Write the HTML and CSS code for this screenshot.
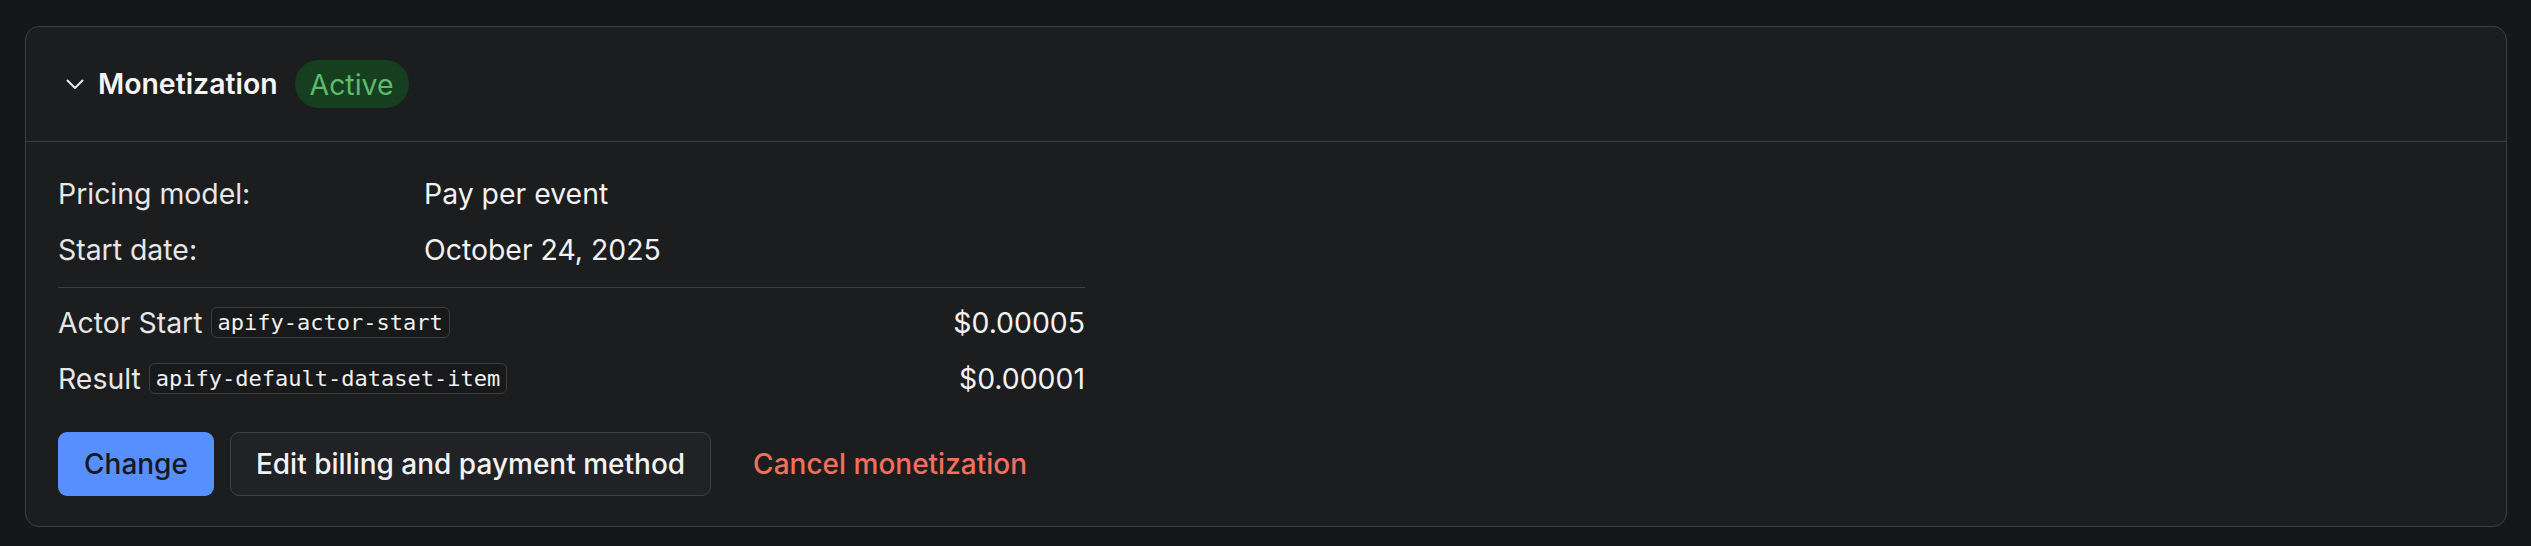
FILE: index.html
```html
<!DOCTYPE html>
<html lang="en">
<head>
<meta charset="utf-8">
<title>Monetization</title>
<link rel="stylesheet" href="styles.css">
</head>
<body>
  <section class="card">
    <header class="card-header">
      <svg class="chevron" width="18" height="11" viewBox="0 0 18 11" aria-hidden="true">
        <polyline points="1.5,1.5 9,9 16.5,1.5" fill="none" stroke="#e8e8e8" stroke-width="2" stroke-linecap="round" stroke-linejoin="round"/>
      </svg>
      <h2 class="title">Monetization</h2>
      <span class="status">Active</span>
    </header>
    <div class="card-body">
      <div class="content">
        <dl class="info">
          <dt>Pricing model:</dt>
          <dd>Pay per event</dd>
          <dt>Start date:</dt>
          <dd>October 24, 2025</dd>
        </dl>
        <hr class="divider">
        <ul class="events">
          <li class="event">
            <span class="event-name">Actor Start <code class="tag">apify-actor-start</code></span>
            <span class="price">$0.00005</span>
          </li>
          <li class="event">
            <span class="event-name">Result <code class="tag">apify-default-dataset-item</code></span>
            <span class="price">$0.00001</span>
          </li>
        </ul>
      </div>
      <div class="actions">
        <button class="btn btn-primary">Change</button>
        <button class="btn btn-secondary">Edit billing and payment method</button>
        <button class="btn btn-danger">Cancel monetization</button>
      </div>
    </div>
  </section>
</body>
</html>
```
FILE: styles.css
```css
* {
  box-sizing: border-box;
}

html, body {
  margin: 0;
  background: #161719;
}

body {
  padding: 26px 24px 0 25px;
  font-family: "Inter", "Noto Sans", sans-serif;
  font-size: 28.4px;
  color: #ececec;
}

.card {
  background: #1c1d1f;
  border: 1px solid #3d3e41;
  border-radius: 14px;
}

.card-header {
  display: flex;
  align-items: center;
  height: 115px;
  padding-left: 40px;
  border-bottom: 1px solid #3d3e41;
}

.chevron {
  display: block;
  margin-right: 14px;
}

.title {
  margin: 0;
  font-size: 28.4px;
  font-weight: 600;
  color: #f5f5f5;
  line-height: 1;
}

.status {
  display: inline-flex;
  align-items: center;
  height: 48px;
  margin-left: 17px;
  padding: 0 15px;
  border-radius: 24px;
  background: #163f20;
  color: #5dbb6b;
  font-size: 28.4px;
}

.card-body {
  padding: 30px 0 30px 32px;
}

.content {
  width: 1027px;
}

.info {
  display: grid;
  grid-template-columns: 366px 1fr;
  row-gap: 13px;
  margin: 0;
  line-height: 43px;
}

.info dt {
  color: #e6e6e6;
}

.info dd {
  margin: 0;
  color: #f2f2f2;
}

.divider {
  margin: 16px 0 13px;
  border: 0;
  border-top: 1px solid #3d3e41;
  height: 0;
}

.events {
  list-style: none;
  margin: 0;
  padding: 0;
  display: flex;
  flex-direction: column;
  gap: 13px;
}

.event {
  display: flex;
  justify-content: space-between;
  align-items: center;
  height: 43px;
}

.event-name {
  color: #e6e6e6;
  display: flex;
  align-items: center;
  gap: 8px;
}

.tag {
  display: inline-flex;
  align-items: center;
  height: 31px;
  padding: 0 6px;
  border: 1px solid #3e3f43;
  border-radius: 6px;
  background: #18191b;
  font-family: "DejaVu Sans Mono", "Liberation Mono", monospace;
  font-size: 22px;
  color: #f0f0f0;
}

.price {
  color: #f2f2f2;
}

.actions {
  display: flex;
  gap: 16px;
  margin-top: 32px;
}

.btn {
  height: 64px;
  padding: 0 25px;
  border-radius: 9px;
  border: 1px solid transparent;
  font-family: "Inter", "Noto Sans", sans-serif;
  font-size: 28px;
  font-weight: 500;
  cursor: pointer;
}

.btn-primary {
  background: #578fff;
  color: #17181b;
}

.btn-secondary {
  background: #212225;
  border-color: #404145;
  color: #f2f2f2;
}

.btn-danger {
  background: transparent;
  color: #f0705c;
}
```
